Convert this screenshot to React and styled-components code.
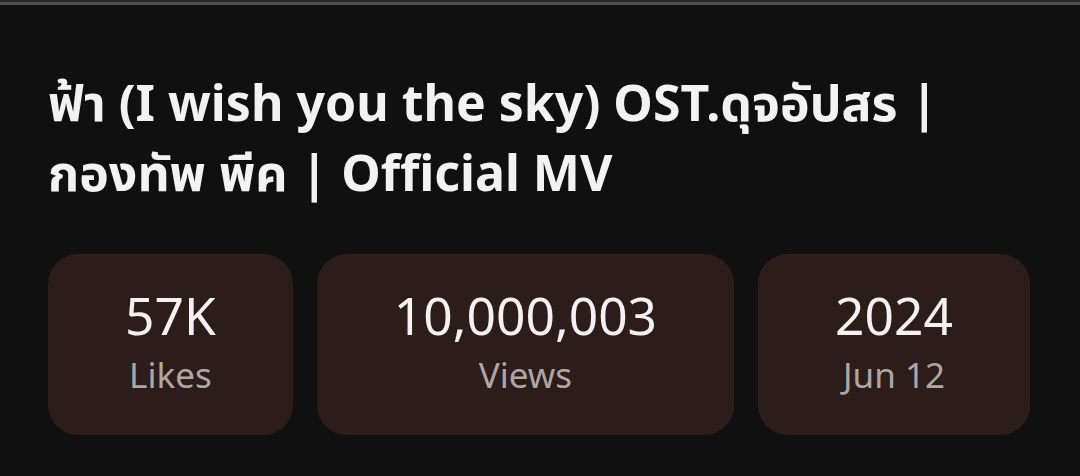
import React from "react";
import styled, { createGlobalStyle } from "styled-components";

const Global = createGlobalStyle`
  html, body { margin: 0; padding: 0; background: #101010; }
  body { font-family: "Noto Sans", "Open Sans", sans-serif; }
`;

const Page = styled.div`
  width: 1080px;
  height: 476px;
  background: #101010;
  display: flex;
  flex-direction: column;
  overflow: hidden;
`;

const TopEdge = styled.div`
  height: 2px;
  background: #262626;
  border-bottom: 3px solid #4e4e4e;
  flex-shrink: 0;
`;

const Content = styled.div`
  padding: 62px 48px 0 48px;
  display: flex;
  flex-direction: column;
`;

const Title = styled.h1`
  margin: 0;
  font-family: "Noto Sans", "Noto Sans Thai", sans-serif;
  font-weight: 700;
  font-size: 50px;
  line-height: 70px;
  color: #f2f2f2;
  max-width: 984px;
`;

const Stats = styled.div`
  display: flex;
  gap: 24px;
  margin-top: 47px;
`;

const Card = styled.div`
  background: #2c1d1a;
  border-radius: 30px;
  height: 181px;
  box-sizing: border-box;
  padding: 31px 77px 0;
  display: flex;
  flex-direction: column;
  align-items: center;
`;

const Value = styled.div`
  font-size: 51.5px;
  line-height: 60px;
  color: #f4f1f0;
  white-space: nowrap;
`;

const Label = styled.div`
  font-size: 35px;
  line-height: 46px;
  color: #aea6a4;
  margin-top: 7px;
  white-space: nowrap;
`;

const stats = [
  { value: "57K", label: "Likes" },
  { value: "10,000,003", label: "Views" },
  { value: "2024", label: "Jun 12" },
];

export default function App() {
  return (
    <Page>
      <Global />
      <TopEdge />
      <Content>
        <Title>ฟ้า (I wish you the sky) OST.ดุจอัปสร | กองทัพ พีค | Official MV</Title>
        <Stats>
          {stats.map((s) => (
            <Card key={s.label}>
              <Value>{s.value}</Value>
              <Label>{s.label}</Label>
            </Card>
          ))}
        </Stats>
      </Content>
    </Page>
  );
}
